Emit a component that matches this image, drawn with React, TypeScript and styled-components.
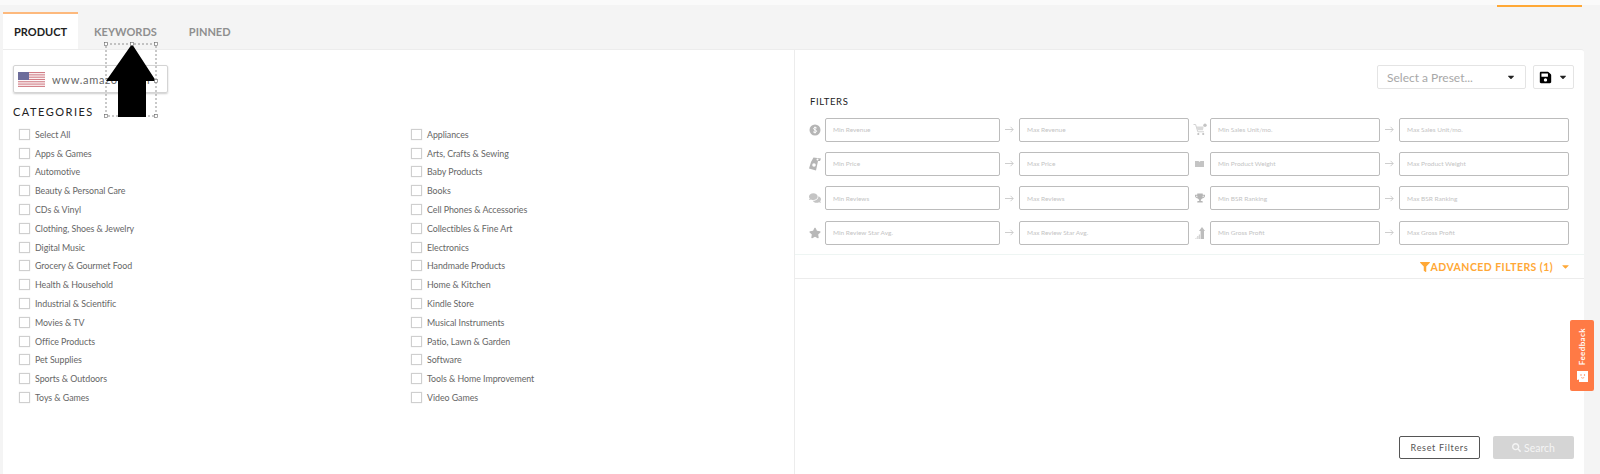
import React from 'react';
import styled, {createGlobalStyle} from 'styled-components';
import {FaComments, FaFilter, FaSave, FaSearch, FaStar, FaTrophy, FaCaretDown} from 'react-icons/fa';

const GlobalStyle = createGlobalStyle`
  html, body {
    margin: 0;
    padding: 0;
    background: #f4f4f4;
    overflow: hidden;
  }
  * {
    box-sizing: border-box;
  }
`

const FONT = `"Lato", "Open Sans", sans-serif`

const leftCategories = [
    'Select All', 'Apps & Games', 'Automotive', 'Beauty & Personal Care', 'CDs & Vinyl',
    'Clothing, Shoes & Jewelry', 'Digital Music', 'Grocery & Gourmet Food', 'Health & Household',
    'Industrial & Scientific', 'Movies & TV', 'Office Products', 'Pet Supplies',
    'Sports & Outdoors', 'Toys & Games',
]

const rightCategories = [
    'Appliances', 'Arts, Crafts & Sewing', 'Baby Products', 'Books', 'Cell Phones & Accessories',
    'Collectibles & Fine Art', 'Electronics', 'Handmade Products', 'Home & Kitchen', 'Kindle Store',
    'Musical Instruments', 'Patio, Lawn & Garden', 'Software', 'Tools & Home Improvement', 'Video Games',
]

const DollarIcon = () => (
    <svg width="12" height="12" viewBox="0 0 12 12">
        <circle cx="6" cy="6" r="5.5" fill="#b5b5b5"/>
        <path d="M7.8 4.2C7.4 3.4 4.6 3.2 4.5 4.6 4.4 6 7.8 5.7 7.6 7.4 7.4 8.8 4.6 8.6 4.1 7.7M6 2.6v6.8" stroke="#fff" strokeWidth="1" fill="none"/>
    </svg>
)

const PriceIcon = () => (
    <svg width="14" height="16" viewBox="0 0 14 16">
        <path d="M5.5 1.5 13 2.5 12 5 10 5 8 14.5 1 12.5 3 6Z" fill="#b5b5b5"/>
        <circle cx="6" cy="9" r="1.8" fill="#fff"/>
        <circle cx="9.5" cy="3.4" r="1" fill="#fff"/>
    </svg>
)

const CartIcon = () => (
    <svg width="14" height="13" viewBox="0 0 14 13">
        <path d="M0.5 1.5H2.6L4.8 8.8H11" stroke="#d2d2d2" strokeWidth="1" fill="none"/>
        <path d="M3.4 3.5H10.6L10 7.2H4.5Z" fill="#dadada"/>
        <circle cx="5.3" cy="11" r="1.1" fill="#c0c0c0"/>
        <circle cx="10.2" cy="11" r="1.1" fill="#c0c0c0"/>
        <circle cx="12" cy="2.2" r="1.7" fill="#c4c4c4"/>
    </svg>
)

const WeightIcon = () => (
    <svg width="9" height="6" viewBox="0 0 9 6">
        <path d="M0 0H3.5L4.5 1 5.5 0H9V6H0Z" fill="#c4c4c4"/>
    </svg>
)

const ProfitIcon = () => (
    <svg width="10" height="12" viewBox="0 0 10 12">
        <path d="M7 0 10 4H9V12H5.6V4H4Z" fill="#bdbdbd"/>
        <path d="M0 12 1.5 10.2V12ZM2.2 12V9H3.4V12ZM3.8 12V7.6H5V12Z" fill="#d2d2d2"/>
    </svg>
)

const ThinArrow = () => (
    <svg width="9" height="7" viewBox="0 0 9 7">
        <path d="M0 3.5H8M5.5 .8 8.2 3.5 5.5 6.2" stroke="#c8c8c8" strokeWidth=".9" fill="none"/>
    </svg>
)

const FaceIcon = () => (
    <svg width="11" height="11" viewBox="0 0 11 11">
        <path d="M0 0H11V11H2V8.5L0 9Z" fill="#fff"/>
        <circle cx="4" cy="4" r=".7" fill="#ff7a45"/>
        <circle cx="7.5" cy="4" r=".7" fill="#ff7a45"/>
        <path d="M4.2 6.5Q5.7 7.8 7.2 6.5" stroke="#ff7a45" strokeWidth=".7" fill="none"/>
    </svg>
)

const Flag = () => (
    <svg width="27" height="15" viewBox="0 0 27 15">
        <rect width="27" height="15" fill="#fff"/>
        {[0, 1, 2, 3, 4, 5, 6].map(i => (
            <rect key={i} y={i * 2.3} width="27" height="1.15" fill="#d17d86"/>
        ))}
        <rect width="11" height="8" fill="#6d6d9b"/>
    </svg>
)

const filterRows = [
    {icon: <DollarIcon/>, min: 'Min Revenue', max: 'Max Revenue'},
    {icon: <PriceIcon/>, min: 'Min Price', max: 'Max Price'},
    {icon: <FaComments size={12} color="#c4c4c4"/>, min: 'Min Reviews', max: 'Max Reviews'},
    {icon: <FaStar size={12} color="#b8b8b8"/>, min: 'Min Review Star Avg.', max: 'Max Review Star Avg.'},
]

const filterRowsRight = [
    {icon: <CartIcon/>, min: 'Min Sales Unit/mo.', max: 'Max Sales Unit/mo.'},
    {icon: <WeightIcon/>, min: 'Min Product Weight', max: 'Max Product Weight'},
    {icon: <FaTrophy size={10} color="#b5b5b5"/>, min: 'Min BSR Ranking', max: 'Max BSR Ranking'},
    {icon: <ProfitIcon/>, min: 'Min Gross Profit', max: 'Max Gross Profit'},
]

const FilterColumn = (props: {rows: typeof filterRows, side: 'left' | 'right'}) => (
    <FilterStack>
        {props.rows.map(row => (
            <FilterRow key={row.min} side={props.side}>
                <FilterIcon>{row.icon}</FilterIcon>
                <RangeInput wide={props.side === 'left'}>{row.min}</RangeInput>
                <RangeArrow><ThinArrow/></RangeArrow>
                <RangeInput>{row.max}</RangeInput>
            </FilterRow>
        ))}
    </FilterStack>
)

const CategoryColumn = (props: {items: string[]}) => (
    <CategoryList>
        {props.items.map(item => (
            <CategoryItem key={item}>
                <CheckBox/>
                <span>{item}</span>
            </CategoryItem>
        ))}
    </CategoryList>
)

export default function App() {
    return (
        <Page>
            <GlobalStyle/>
            <TopStrip><TopAccent/></TopStrip>
            <Main>
                <Tabs>
                    <Tab active>PRODUCT</Tab>
                    <Tab>KEYWORDS</Tab>
                    <Tab>PINNED</Tab>
                </Tabs>
                <Card>
                    <LeftPane>
                        <MarketBox>
                            <Flag/>
                            <MarketText>www.amazon.com</MarketText>
                        </MarketBox>
                        <CategoriesTitle>CATEGORIES</CategoriesTitle>
                        <CategoryGrid>
                            <CategoryColumn items={leftCategories}/>
                            <CategoryColumn items={rightCategories}/>
                        </CategoryGrid>
                    </LeftPane>
                    <RightPane>
                        <PresetBar>
                            <PresetSelect>
                                Select a Preset...
                                <FaCaretDown size={10} color="#222"/>
                            </PresetSelect>
                            <SaveButton>
                                <FaSave size={13} color="#000"/>
                                <FaCaretDown size={10} color="#222"/>
                            </SaveButton>
                        </PresetBar>
                        <FiltersTitle>FILTERS</FiltersTitle>
                        <FilterGrid>
                            <FilterColumn rows={filterRows} side="left"/>
                            <FilterColumn rows={filterRowsRight} side="right"/>
                        </FilterGrid>
                        <AdvancedBar>
                            <FaFilter size={10}/>
                            <AdvancedLabel>ADVANCED FILTERS (1)</AdvancedLabel>
                            <FaCaretDown size={11}/>
                        </AdvancedBar>
                        <ActionBar>
                            <ResetButton>Reset Filters</ResetButton>
                            <SearchButton><FaSearch size={9}/>Search</SearchButton>
                        </ActionBar>
                    </RightPane>
                    <Feedback>
                        <FeedbackLabel>Feedback</FeedbackLabel>
                        <FaceIcon/>
                    </Feedback>
                </Card>
            </Main>
            <ArrowMark>
                <svg width="54" height="76" viewBox="0 0 54 76">
                    <rect x="2" y="2" width="50" height="72" fill="none" stroke="#666" strokeWidth="0.7" strokeDasharray="2 2"/>
                    <path d="M28 2 52 39H42V75H14V39H2Z" fill="#000"/>
                    <rect x="0.5" y="0.5" width="3" height="3" fill="#fff" stroke="#666" strokeWidth="0.6"/>
                    <rect x="50.5" y="0.5" width="3" height="3" fill="#fff" stroke="#666" strokeWidth="0.6"/>
                    <rect x="26.5" y="0.5" width="3" height="3" fill="#fff" stroke="#666" strokeWidth="0.6"/>
                    <rect x="0.5" y="72.5" width="3" height="3" fill="#fff" stroke="#666" strokeWidth="0.6"/>
                    <rect x="50.5" y="72.5" width="3" height="3" fill="#fff" stroke="#666" strokeWidth="0.6"/>
                    <rect x="50.5" y="37.5" width="3" height="3" fill="#fff" stroke="#666" strokeWidth="0.6"/>
                </svg>
            </ArrowMark>
        </Page>
    );
}

const Page = styled.div`
  position: relative;
  width: 1600px;
  height: 474px;
  overflow: hidden;
  background: #f4f4f4;
  font-family: ${FONT};
`

const TopStrip = styled.div`
  display: flex;
  justify-content: flex-end;
  height: 7px;
  padding-right: 18px;
  background: linear-gradient(#fafafa 5px, #f4f4f4 5px);
`

const TopAccent = styled.div`
  width: 85px;
  height: 2px;
  margin-top: 5px;
  background: #ffa836;
`

const Main = styled.div`
  padding: 5px 16px 0 3px;
`

const Tabs = styled.div`
  display: flex;
  height: 37px;
`

const Tab = styled.div<{active?: boolean}>`
  display: flex;
  align-items: center;
  justify-content: center;
  height: 37px;
  padding: 0 ${props => props.active ? '11px 0 11px' : '16px'};
  border-top: 2px solid ${props => props.active ? '#fdb97d' : 'transparent'};
  background: ${props => props.active ? '#fff' : 'transparent'};
  color: ${props => props.active ? '#222' : '#8f8f8f'};
  font-size: 11px;
  font-weight: 700;
`

const Card = styled.div`
  position: relative;
  display: grid;
  grid-template-columns: 792px 1fr;
  height: 425px;
  background: #fff;
  border-top: 1px solid #ececec;
  border-radius: 0 3px 0 0;
`

const LeftPane = styled.div`
  padding: 15px 0 0 10px;
  border-right: 1px solid #ececec;
`

const MarketBox = styled.div`
  display: flex;
  align-items: center;
  gap: 7px;
  width: 155px;
  height: 28px;
  padding-left: 4px;
  border: 1px solid #d4d4d4;
  border-radius: 2px;
  box-shadow: 0 1px 2px rgba(0, 0, 0, .2);
`

const MarketText = styled.span`
  color: #666;
  font-size: 11px;
  letter-spacing: .7px;
`

const CategoriesTitle = styled.h3`
  margin: 12px 0 0;
  color: #222;
  font-size: 11px;
  font-weight: 400;
  letter-spacing: 1.5px;
  line-height: 14px;
`

const CategoryGrid = styled.div`
  display: grid;
  grid-template-columns: 392px 1fr;
  margin-top: 6px;
  padding-left: 6px;
`

const CategoryList = styled.div`
  display: flex;
  flex-direction: column;
`

const CategoryItem = styled.label`
  display: flex;
  align-items: center;
  gap: 5px;
  height: 18.8px;
  color: #666;
  font-size: 8.85px;
  letter-spacing: -.05px;
`

const CheckBox = styled.span`
  display: block;
  width: 11px;
  height: 11px;
  border: 1px solid #cfcfcf;
  box-shadow: 0 0 1px rgba(0, 0, 0, .15);
`

const RightPane = styled.div`
  position: relative;
  display: flex;
  flex-direction: column;
`

const PresetBar = styled.div`
  display: flex;
  justify-content: flex-end;
  gap: 7px;
  padding: 15px 10px 0 0;
`

const PresetSelect = styled.div`
  display: flex;
  align-items: center;
  justify-content: space-between;
  width: 149px;
  height: 24px;
  padding: 0 9px;
  border: 1px solid #e4e4e4;
  border-radius: 2px;
  color: #a8a8a8;
  font-size: 12px;
`

const SaveButton = styled.div`
  display: flex;
  align-items: center;
  justify-content: center;
  gap: 6px;
  width: 41px;
  height: 24px;
  border: 1px solid #e4e4e4;
  border-radius: 2px;
`

const FiltersTitle = styled.h3`
  margin: 7px 0 0 15px;
  color: #222;
  font-size: 9.5px;
  font-weight: 400;
  letter-spacing: .6px;
  line-height: 12px;
`

const FilterGrid = styled.div`
  display: grid;
  grid-template-columns: 394px 1fr;
  margin-top: 9.5px;
`

const FilterStack = styled.div`
  display: flex;
  flex-direction: column;
  gap: 10.4px;
`

const FilterRow = styled.div<{side: 'left' | 'right'}>`
  display: flex;
  align-items: center;
  height: 24px;
  padding-left: ${props => props.side === 'left' ? '9px' : '0'};
`

const FilterIcon = styled.div`
  display: flex;
  justify-content: center;
  width: 21px;
  flex: none;
`

const RangeInput = styled.div<{wide?: boolean}>`
  display: flex;
  align-items: center;
  width: ${props => props.wide ? '175px' : '170px'};
  height: 24px;
  padding-left: 7px;
  border: 1px solid #bcbcbc;
  border-radius: 2px;
  color: #c4c4c4;
  font-size: 6.5px;
`

const RangeArrow = styled.div`
  display: flex;
  justify-content: center;
  width: 19px;
`

const AdvancedBar = styled.div`
  display: flex;
  align-items: center;
  justify-content: flex-end;
  gap: 1px;
  height: 25px;
  margin-top: 9.5px;
  padding-right: 13px;
  border-top: 1px solid #eef5f3;
  border-bottom: 1px solid #ececec;
  color: #ffa836;
`

const AdvancedLabel = styled.span`
  margin-right: 6px;
  font-size: 10.5px;
  font-weight: 700;
  letter-spacing: .45px;
`

const ActionBar = styled.div`
  display: flex;
  justify-content: flex-end;
  gap: 13px;
  padding: 157px 10px 0 0;
`

const ResetButton = styled.div`
  display: flex;
  align-items: center;
  justify-content: center;
  width: 81px;
  height: 23px;
  border: 1px solid #555;
  border-radius: 2px;
  color: #555;
  font-size: 9px;
  letter-spacing: .7px;
`

const SearchButton = styled.div`
  display: flex;
  align-items: center;
  justify-content: center;
  gap: 3px;
  width: 81px;
  height: 23px;
  border-radius: 2px;
  background: #d5d5d5;
  color: #f4f4f4;
  font-size: 10.5px;
`

const Feedback = styled.div`
  position: absolute;
  top: 270px;
  right: -10px;
  display: flex;
  flex-direction: column;
  align-items: center;
  justify-content: space-between;
  width: 24px;
  height: 71px;
  padding: 8px 0 9px;
  border-radius: 2px;
  background: #ff7a45;
`

const FeedbackLabel = styled.span`
  color: #fff;
  font-size: 8px;
  font-weight: 700;
  letter-spacing: .4px;
  writing-mode: vertical-rl;
  transform: rotate(180deg);
`

const ArrowMark = styled.div`
  position: absolute;
  left: 104px;
  top: 42px;
  line-height: 0;
`
